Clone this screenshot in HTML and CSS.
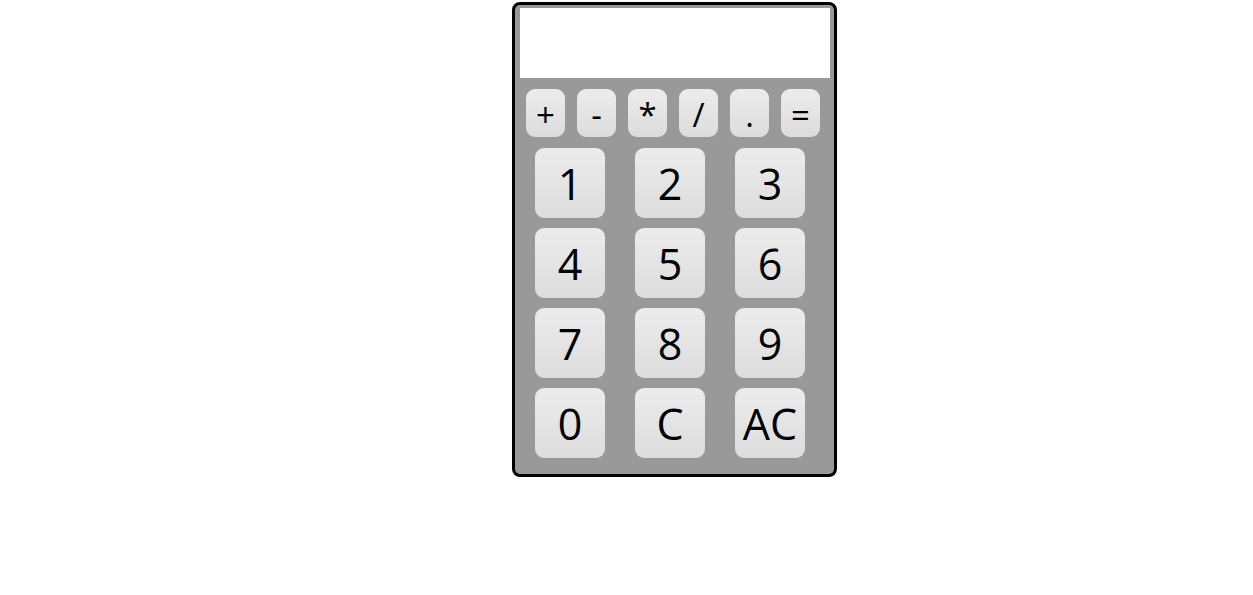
FILE: index.html
```html
<!DOCTYPE html>
<html>
<head>
<meta charset="utf-8">
<link rel="stylesheet" href="styles.css">
</head>
<body>
<div class="calc">
  <div class="display"></div>
  <div class="ops">
    <button class="btn op">+</button>
    <button class="btn op">-</button>
    <button class="btn op">*</button>
    <button class="btn op">/</button>
    <button class="btn op">.</button>
    <button class="btn op">=</button>
  </div>
  <div class="keys">
    <button class="btn num">1</button>
    <button class="btn num">2</button>
    <button class="btn num">3</button>
    <button class="btn num">4</button>
    <button class="btn num">5</button>
    <button class="btn num">6</button>
    <button class="btn num">7</button>
    <button class="btn num">8</button>
    <button class="btn num">9</button>
    <button class="btn num">0</button>
    <button class="btn num">C</button>
    <button class="btn num">AC</button>
  </div>
</div>
</body>
</html>
```
FILE: styles.css
```css
html, body {
  margin: 0;
  padding: 0;
  background: #fff;
}
body {
  font-family: "Open Sans", "DejaVu Sans", sans-serif;
}
.calc {
  box-sizing: border-box;
  width: 325px;
  height: 475px;
  margin: 2px 0 0 512px;
  border: 3px solid #000;
  border-radius: 8px;
  background: #999999;
  padding: 3px 4px 15px 5px;
  display: flex;
  flex-direction: column;
}
.display {
  width: 310px;
  height: 70px;
  background: #fff;
}
.ops {
  display: flex;
  gap: 12px;
  margin-top: 11px;
  padding-left: 6px;
}
.keys {
  display: grid;
  grid-template-columns: repeat(3, 70px);
  grid-auto-rows: 70px;
  column-gap: 30px;
  row-gap: 10px;
  margin-top: 11px;
  padding-left: 15px;
}
.btn {
  border: none;
  margin: 0;
  padding: 0;
  border-radius: 9px;
  background: linear-gradient(#ececec, #dcdcdc);
  color: #000;
  font-family: "Open Sans", "DejaVu Sans", sans-serif;
  display: flex;
  align-items: center;
  justify-content: center;
}
.op {
  width: 39px;
  height: 48px;
  font-size: 33px;
  font-weight: 500;
  padding-top: 3px;
}
.num {
  width: 70px;
  height: 70px;
  font-size: 43px;
}
```
